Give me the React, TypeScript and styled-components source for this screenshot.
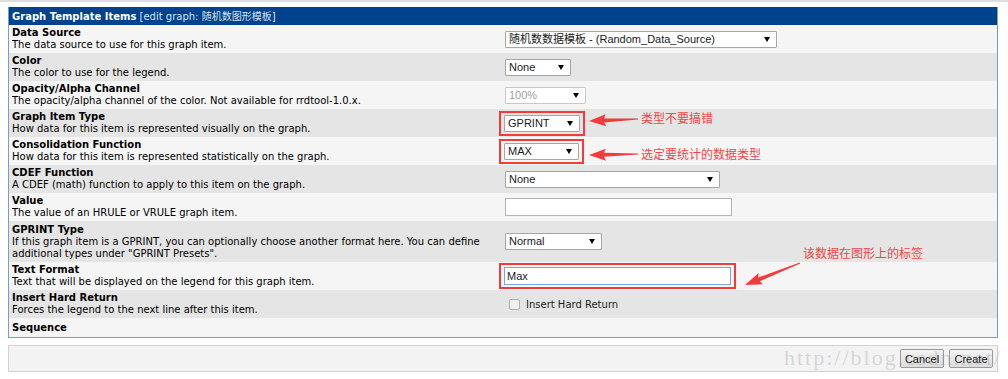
// libs
import type { ReactNode } from 'react';
import styled, { createGlobalStyle } from 'styled-components';

const GlobalStyle = createGlobalStyle`
  html, body {
    margin: 0;
    padding: 0;
    background: #ffffff;
  }
`;

const Page = styled.div`
  position: relative;
  width: 1008px;
  height: 379px;
  box-sizing: border-box;
  border-top: 2px solid #dedede;
  padding: 5px 10px 0 8px;
  font-family: 'DejaVu Sans', Verdana, sans-serif;
  overflow: hidden;
`;

const Table = styled.section`
  border: 1px solid #7c9cc8;
  border-top: 0;
`;

const Header = styled.div`
  height: 18px;
  box-sizing: border-box;
  padding: 3px 3px 0;
  background: #00438c;
  color: #ffffff;
  font-size: 10px;
  line-height: 13px;
  white-space: nowrap;
`;

const HeaderTitle = styled.span`
  font-weight: bold;
`;

const HeaderSub = styled.span`
  color: #d8e2f0;
  font-family: 'DejaVu Sans', 'Noto Sans CJK SC', sans-serif;
`;

const Row = styled.div<{ $dark: boolean; $minHeight?: number }>`
  display: grid;
  grid-template-columns: 496px 1fr;
  align-items: center;
  background: ${({ $dark }) => ($dark ? '#e5e5e5' : '#f5f5f5')};
  min-height: ${({ $minHeight }) => ($minHeight ? `${$minHeight}px` : 'auto')};
`;

const Cell = styled.div`
  padding: 2px 3px;
  font-size: 10px;
  line-height: 12px;
  color: #000000;
`;

const Label = styled.div`
  font-weight: bold;
`;

const Control = styled.div`
  display: flex;
  align-items: center;
`;

const SelectBox = styled.div<{ $width: number; $disabled?: boolean }>`
  position: relative;
  width: ${({ $width }) => $width}px;
  height: 17px;
  box-sizing: border-box;
  border: 1px solid ${({ $disabled }) => ($disabled ? '#c8c8c8' : '#a6a6a6')};
  border-radius: 1px;
  background: #ffffff;
  padding: 0 16px 0 3px;
  font-family: 'Liberation Sans', 'Noto Sans CJK SC', Arial, sans-serif;
  font-size: 11px;
  line-height: 15px;
  color: ${({ $disabled }) => ($disabled ? '#a0a0a0' : '#1a1a1a')};
  white-space: nowrap;
  overflow: hidden;

  &::after {
    content: '';
    position: absolute;
    right: 6px;
    top: 5px;
    border-left: 3px solid transparent;
    border-right: 3px solid transparent;
    border-top: 5px solid #000000;
  }
`;

const TextInput = styled.div<{ $focused?: boolean }>`
  width: 227px;
  height: 18px;
  box-sizing: border-box;
  border: 1px solid ${({ $focused }) => ($focused ? '#7ea6dc' : '#b5b5b5')};
  background: #ffffff;
  padding: 0 2px;
  font-family: 'Liberation Sans', Arial, sans-serif;
  font-size: 11px;
  line-height: 16px;
  color: #222222;
`;

const Highlight = styled.div`
  margin-left: -6px;
  padding: 2px 3px;
  border: 2.5px solid #f23c3c;
`;

const CheckLine = styled.label`
  display: flex;
  align-items: center;
  gap: 6px;
  padding-left: 4px;
  font-size: 10px;
  color: #222222;
`;

const CheckBox = styled.span`
  width: 9px;
  height: 9px;
  border: 1px solid #b0b0b0;
  border-radius: 2px;
  background: #f0f0f0;
`;

const ButtonBar = styled.div`
  margin-top: 7px;
  height: 27px;
  box-sizing: border-box;
  border: 1px solid #d2d2d2;
  background: #f3f3f3;
  display: flex;
  justify-content: flex-end;
  align-items: center;
  gap: 5px;
  padding-right: 4px;
`;

const Button = styled.button`
  height: 19px;
  width: 44px;
  padding: 0;
  border: 1px solid #9a9a9a;
  border-radius: 2px;
  background: linear-gradient(#f4f4f4, #dcdcdc);
  font-family: 'Liberation Sans', Arial, sans-serif;
  font-size: 11px;
  color: #111111;
`;

const Watermark = styled.div`
  position: absolute;
  left: 784px;
  top: 343px;
  font-family: 'Liberation Serif', serif;
  font-size: 22px;
  letter-spacing: 2px;
  color: rgba(140, 140, 140, 0.3);
  white-space: nowrap;
  pointer-events: none;
`;

const Note = styled.div<{ $x: number; $y: number }>`
  position: absolute;
  left: ${({ $x }) => $x}px;
  top: ${({ $y }) => $y}px;
  font-family: 'Noto Sans CJK SC', sans-serif;
  font-size: 12px;
  line-height: 14px;
  color: #f04545;
  white-space: nowrap;
`;

const ArrowLayer = styled.svg`
  position: absolute;
  left: 0;
  top: 0;
  pointer-events: none;
`;

type Item = {
  label: string;
  desc: ReactNode;
  control?: ReactNode;
  minHeight?: number;
};

const items: Item[] = [
  {
    label: 'Data Source',
    desc: 'The data source to use for this graph item.',
    control: <SelectBox $width={272}>随机数数据模板 - (Random_Data_Source)</SelectBox>,
  },
  {
    label: 'Color',
    desc: 'The color to use for the legend.',
    control: <SelectBox $width={66}>None</SelectBox>,
  },
  {
    label: 'Opacity/Alpha Channel',
    desc: 'The opacity/alpha channel of the color. Not available for rrdtool-1.0.x.',
    control: (
      <SelectBox $width={81} $disabled>
        100%
      </SelectBox>
    ),
  },
  {
    label: 'Graph Item Type',
    desc: 'How data for this item is represented visually on the graph.',
    control: (
      <Highlight>
        <SelectBox $width={76}>GPRINT</SelectBox>
      </Highlight>
    ),
  },
  {
    label: 'Consolidation Function',
    desc: 'How data for this item is represented statistically on the graph.',
    control: (
      <Highlight>
        <SelectBox $width={75}>MAX</SelectBox>
      </Highlight>
    ),
  },
  {
    label: 'CDEF Function',
    desc: 'A CDEF (math) function to apply to this item on the graph.',
    control: <SelectBox $width={215}>None</SelectBox>,
  },
  {
    label: 'Value',
    desc: 'The value of an HRULE or VRULE graph item.',
    control: <TextInput />,
  },
  {
    label: 'GPRINT Type',
    desc: (
      <>
        If this graph item is a GPRINT, you can optionally choose another format here. You can define
        <br />
        additional types under "GPRINT Presets".
      </>
    ),
    control: <SelectBox $width={97}>Normal</SelectBox>,
    minHeight: 41,
  },
  {
    label: 'Text Format',
    desc: 'Text that will be displayed on the legend for this graph item.',
    control: (
      <Highlight>
        <TextInput $focused>Max</TextInput>
      </Highlight>
    ),
  },
  {
    label: 'Insert Hard Return',
    desc: 'Forces the legend to the next line after this item.',
    control: (
      <CheckLine>
        <CheckBox />
        Insert Hard Return
      </CheckLine>
    ),
  },
  {
    label: 'Sequence',
    desc: null,
    minHeight: 19,
  },
];

// arrow from tip to tail: a thin tapered shaft with a head
const arrowPoints = (tx: number, ty: number, ex: number, ey: number) => {
  const dx = ex - tx;
  const dy = ey - ty;
  const len = Math.hypot(dx, dy);
  const ux = dx / len;
  const uy = dy / len;
  const nx = -uy;
  const ny = ux;
  const head = 15;
  const headW = 6;
  const neckW = 2;
  const tailW = 0.6;
  const bx = tx + ux * head;
  const by = ty + uy * head;
  const pts = [
    [tx, ty],
    [bx + nx * headW + ux * 2, by + ny * headW + uy * 2],
    [bx + nx * neckW, by + ny * neckW],
    [ex + nx * tailW, ey + ny * tailW],
    [ex - nx * tailW, ey - ny * tailW],
    [bx - nx * neckW, by - ny * neckW],
    [bx - nx * headW + ux * 2, by - ny * headW + uy * 2],
  ];
  return pts.map(([x, y]) => `${x.toFixed(1)},${y.toFixed(1)}`).join(' ');
};

export default function App() {
  return (
    <>
      <GlobalStyle />
      <Page>
        <Table>
          <Header>
            <HeaderTitle>Graph Template Items</HeaderTitle>
            <HeaderSub> [edit graph: 随机数图形模板]</HeaderSub>
          </Header>

          {items.map((item, i) => (
            <Row key={item.label} $dark={i % 2 === 1} $minHeight={item.minHeight}>
              <Cell>
                <Label>{item.label}</Label>
                {item.desc && <div>{item.desc}</div>}
              </Cell>
              <Control>{item.control}</Control>
            </Row>
          ))}
        </Table>

        <ButtonBar>
          <Button>Cancel</Button>
          <Button>Create</Button>
        </ButtonBar>

        <Note $x={641} $y={109}>类型不要搞错</Note>
        <Note $x={641} $y={145}>选定要统计的数据类型</Note>
        <Note $x={803} $y={244}>该数据在图形上的标签</Note>

        <ArrowLayer width={1008} height={379}>
          <polygon points={arrowPoints(589, 119, 638, 117)} fill="#f23c3c" />
          <polygon points={arrowPoints(589, 153, 638, 152)} fill="#f23c3c" />
          <polygon points={arrowPoints(745, 283, 800, 261)} fill="#f23c3c" />
        </ArrowLayer>

        <Watermark>http://blog.csdn.net/</Watermark>
      </Page>
    </>
  );
}
